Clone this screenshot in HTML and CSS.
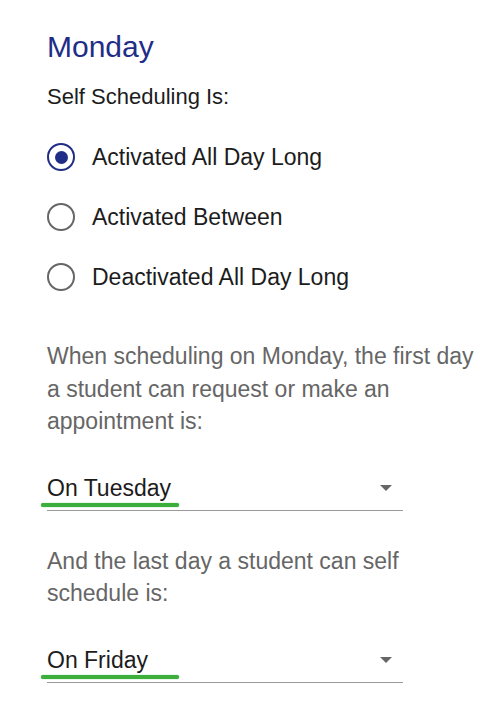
FILE: index.html
```html
<!DOCTYPE html>
<html lang="en">
<head>
    <meta charset="UTF-8">
    <meta name="viewport" content="width=device-width, initial-scale=1.0">
    <title>Self Scheduling</title>
    <link rel="stylesheet" href="styles.css">
</head>
<body>
    <main class="day-settings">
        <!-- Day title -->
        <h2 class="day-title">Monday</h2>
        <p class="section-label">Self Scheduling Is:</p>

        <div class="radio-group">
            <label class="radio-row">
                <span class="radio checked"></span>
                <span class="radio-text">Activated All Day Long</span>
            </label>
            <label class="radio-row">
                <span class="radio"></span>
                <span class="radio-text">Activated Between</span>
            </label>
            <label class="radio-row">
                <span class="radio"></span>
                <span class="radio-text">Deactivated All Day Long</span>
            </label>
        </div>

        <p class="hint">When scheduling on Monday, the first day a student can request or make an appointment is:</p>
        <div class="select">
            <span class="select-value">On Tuesday</span>
            <span class="select-arrow"></span>
        </div>

        <p class="hint hint-last">And the last day a student can self schedule is:</p>
        <div class="select">
            <span class="select-value">On Friday</span>
            <span class="select-arrow"></span>
        </div>
    </main>
</body>
</html>
```

FILE: styles.css
```css
/* General */
body {
    margin: 0;
    background: #fff;
    font-family: "Liberation Sans", Arial, Helvetica, sans-serif;
    color: #1c1c1c;
}

.day-settings {
    display: flex;
    flex-direction: column;
    padding: 27px 0 0 47px;
}

.day-title {
    margin: 0;
    font-size: 30px;
    font-weight: normal;
    line-height: 40px;
    color: #1f2d87;
}

.section-label {
    margin: 14px 0 0;
    font-size: 22px;
    line-height: 32px;
}

/* Radio buttons */
.radio-group {
    display: flex;
    flex-direction: column;
    margin-top: 14px;
}

.radio-row {
    display: flex;
    align-items: center;
    gap: 17px;
    height: 60px;
}

.radio {
    box-sizing: border-box;
    width: 28px;
    height: 28px;
    border: 2.5px solid #666;
    border-radius: 50%;
    display: flex;
    align-items: center;
    justify-content: center;
}

.radio.checked {
    border-color: #1f2d87;
}

.radio.checked::after {
    content: "";
    width: 13px;
    height: 13px;
    border-radius: 50%;
    background: #1f2d87;
}

.radio-text {
    font-size: 23px;
    line-height: 33px;
    color: #1c1c1c;
}

/* Hints and selects */
.hint {
    margin: 33px 0 0;
    max-width: 440px;
    font-size: 23px;
    line-height: 32.5px;
    color: #666;
}

.hint-last {
    margin-top: 34px;
}

.select {
    display: flex;
    align-items: center;
    justify-content: space-between;
    width: 356px;
    margin-top: 34px;
    padding-bottom: 5px;
    border-bottom: 1px solid #999;
}

.select-value {
    position: relative;
    font-size: 23px;
    line-height: 33px;
    color: #1c1c1c;
}

/* green marker under the chosen value */
.select-value::after {
    content: "";
    position: absolute;
    left: -6px;
    bottom: -2px;
    width: 138px;
    height: 4px;
    border-radius: 2px;
    background: #3cae3c;
    box-shadow: 0 0 1px #3cae3c;
}

.select-arrow {
    width: 0;
    height: 0;
    margin-right: 11px;
    border-left: 6.5px solid transparent;
    border-right: 6.5px solid transparent;
    border-top: 6px solid #666;
}
```
